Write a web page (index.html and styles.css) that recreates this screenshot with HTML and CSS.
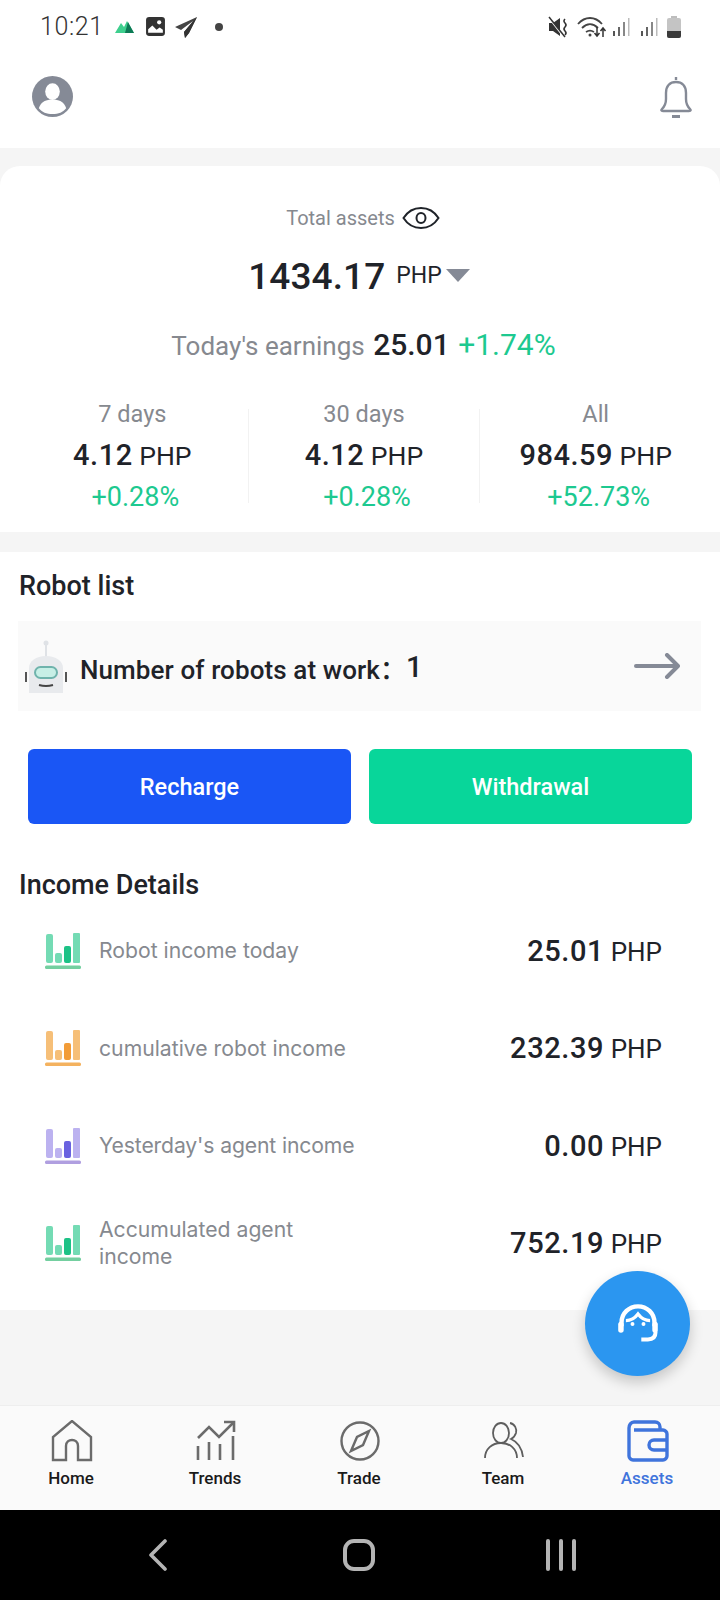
FILE: index.html
```html
<!DOCTYPE html>
<html lang="en">
<head>
<meta charset="utf-8">
<title>Assets</title>
<link rel="stylesheet" href="styles.css">
</head>
<body>
<div class="app">
  <div class="statusbar">
    <div class="status-left">
      <span class="clock">10:21</span>
      <svg class="si-peak" viewBox="0 0 20 14"><path d="M0 13 6 3l3 4 3-6 7 12z" fill="#3ecf8e"/><path d="M10 13 13 2l6 11z" fill="#0c7a55"/></svg>
      <svg class="si-pic" viewBox="0 0 20 20"><rect x="1" y="1" width="18" height="18" rx="3" fill="#333"/><circle cx="13.5" cy="6" r="2" fill="#fff"/><path d="M3 16V12.500l4-3.500 4 4 3-2 3 2V16z" fill="#fff"/></svg>
      <svg class="si-send" viewBox="0 0 24 22"><path d="M23 1 1 11l6 3 12-9-9 11 1 6 4-5z" fill="#444"/><path d="M23 1 15 17l-4 5-1-6z" fill="#333"/></svg>
      <span class="si-dot"></span>
    </div>
    <div class="status-right">
      <svg class="si-mute" viewBox="0 0 22 22"><path d="M1 7h4l7-5v18l-7-5H1z" fill="#333"/><path d="M1 2l14 18" stroke="#fff" stroke-width="1.500"/><path d="M1 1l16 20" stroke="#333" stroke-width="1.500"/><path d="M17 3q-2 2 0 4t0 4 0 4 0 4" fill="none" stroke="#333" stroke-width="1.600"/></svg>
      <svg class="si-wifi" viewBox="0 0 30 24"><g fill="none" stroke="#444" stroke-width="1.800"><path d="M1 9c7-8 17-8 24 0"/><path d="M5 13c5-5 11-5 16 0"/><path d="M9 17c3-2 5-2 8 0"/></g><circle cx="13" cy="20" r="1.500" fill="#444"/><path d="M20 12v9m-2.500-3 2.500 3 2.500-3" fill="none" stroke="#333" stroke-width="1.500"/><path d="M26 22v-9m-2.500 3 2.500-3 2.500 3" fill="none" stroke="#333" stroke-width="1.500"/></svg>
      <svg class="si-signal" viewBox="0 0 18 20"><rect x="1" y="14" width="2" height="5" fill="#555"/><rect x="6" y="10" width="2" height="9" fill="#666"/><rect x="11" y="5" width="2" height="14" fill="#888"/><rect x="16" y="1" width="1.500" height="18" fill="#bbb"/></svg>
      <svg class="si-signal" viewBox="0 0 18 20"><rect x="1" y="14" width="2" height="5" fill="#555"/><rect x="6" y="10" width="2" height="9" fill="#666"/><rect x="11" y="5" width="2" height="14" fill="#888"/><rect x="16" y="1" width="1.500" height="18" fill="#bbb"/></svg>
      <svg class="si-batt" viewBox="0 0 14 22"><rect x="4" y="0" width="6" height="3" fill="#bdbdbd"/><rect x="0" y="2" width="14" height="20" rx="2" fill="#c4c4c4"/><path d="M0 15h14v5a2 2 0 0 1-2 2H2a2 2 0 0 1-2-2z" fill="#3a3a3a"/></svg>
    </div>
  </div>

  <header class="topbar">
    <svg class="avatar" viewBox="0 0 42 42"><circle cx="21" cy="21" r="21" fill="#858a96"/><ellipse cx="21" cy="16" rx="7.500" ry="8.500" fill="#fff"/><path d="M7 33c2-7 8-9 14-9s12 2 14 9c-3 4-8 6-14 6s-11-2-14-6z" fill="#fff"/></svg>
    <svg class="bell" viewBox="0 0 34 44" fill="none" stroke="#858a96" stroke-width="2.400"><path d="M17 2v3"/><path d="M3 34c3-3 4-6 4-10v-6c0-7 4-11 10-11s10 4 10 11v6c0 4 1 7 4 10 1 1 1 2-1 2H4c-2 0-2-1-1-2z"/><path d="M13 41.500h8" stroke-width="3"/></svg>
  </header>

  <section class="summary">
    <div class="total-label">
      <span>Total assets</span>
      <svg class="eye" viewBox="0 0 38 24" fill="none" stroke="#1f2329" stroke-width="2"><path d="M1.500 12C6 5 12 2 19 2s13 3 17.500 10C32 19 26 22 19 22S6 19 1.500 12z"/><ellipse cx="19" cy="12" rx="4.500" ry="5"/></svg>
    </div>
    <div class="total-value">
      <span class="big">1434.17</span>
      <span class="unit">PHP</span>
      <span class="caret"></span>
    </div>
    <div class="earnings">
      <span class="muted">Today's earnings</span>
      <span class="strong">25.01</span>
      <span class="green">+1.74%</span>
    </div>
    <div class="periods">
      <div class="period">
        <div class="p-label">7 days</div>
        <div class="p-value"><b>4.12</b> PHP</div>
        <div class="p-pct">+0.28%</div>
      </div>
      <div class="period">
        <div class="p-label">30 days</div>
        <div class="p-value"><b>4.12</b> PHP</div>
        <div class="p-pct">+0.28%</div>
      </div>
      <div class="period">
        <div class="p-label">All</div>
        <div class="p-value"><b>984.59</b> PHP</div>
        <div class="p-pct">+52.73%</div>
      </div>
    </div>
  </section>

  <section class="panel">
    <h2 class="title">Robot list</h2>
    <div class="robots">
      <svg class="robot" viewBox="0 0 44 54">
        <circle cx="22" cy="3" r="2.500" fill="#dfe2e6"/>
        <rect x="21" y="4" width="2" height="13" fill="#dfe2e6"/>
        <rect x="1" y="32" width="2" height="10" fill="#555"/>
        <rect x="41" y="32" width="2" height="10" fill="#555"/>
        <path d="M5 28c0-7 7-12 17-12s17 5 17 12v25H5z" fill="#e8eaed"/>
        <rect x="11" y="27" width="22" height="11" rx="5.500" fill="#c7efe6" stroke="#6fb3ac" stroke-width="2"/>
        <path d="M15 45q7 2 14 0" fill="none" stroke="#444" stroke-width="2"/>
      </svg>
      <span class="robots-text">Number of robots at work：</span>
      <span class="robots-count">1</span>
      <svg class="arrow" viewBox="0 0 46 26" fill="none" stroke="#858a96" stroke-width="4" stroke-linecap="round" stroke-linejoin="round"><path d="M2 13h41"/><path d="M33 2l11 11-11 11"/></svg>
    </div>
    <div class="actions">
      <button class="btn btn-blue">Recharge</button>
      <button class="btn btn-green">Withdrawal</button>
    </div>
    <h2 class="title title-income">Income Details</h2>
    <ul class="income">
      <li class="row">
        <svg class="bars" viewBox="0 0 36 36"><rect x="1" y="1" width="7" height="29" rx="2" fill="#74dbb4"/><rect x="10" y="20" width="7" height="10" rx="2" fill="#74dbb4"/><rect x="19" y="13" width="7" height="17" rx="2" fill="#1dc286"/><rect x="28" y="0" width="7" height="30" rx="1" fill="#74dbb4"/><rect y="32.500" width="36" height="3.500" rx="1.500" fill="#74cfa0"/></svg>
        <span class="row-label">Robot income today</span>
        <span class="row-value"><b>25.01</b> PHP</span>
      </li>
      <li class="row">
        <svg class="bars" viewBox="0 0 36 36"><rect x="1" y="1" width="7" height="29" rx="2" fill="#f6bf78"/><rect x="10" y="20" width="7" height="10" rx="2" fill="#f6bf78"/><rect x="19" y="13" width="7" height="17" rx="2" fill="#f29c38"/><rect x="28" y="0" width="7" height="30" rx="1" fill="#f6bf78"/><rect y="32.500" width="36" height="3.500" rx="1.500" fill="#f4b25f"/></svg>
        <span class="row-label">cumulative robot income</span>
        <span class="row-value"><b>232.39</b> PHP</span>
      </li>
      <li class="row">
        <svg class="bars" viewBox="0 0 36 36"><rect x="1" y="1" width="7" height="29" rx="2" fill="#bcb2f0"/><rect x="10" y="20" width="7" height="10" rx="2" fill="#bcb2f0"/><rect x="19" y="13" width="7" height="17" rx="2" fill="#6a62e0"/><rect x="28" y="0" width="7" height="30" rx="1" fill="#bcb2f0"/><rect y="32.500" width="36" height="3.500" rx="1.500" fill="#b09fe0"/></svg>
        <span class="row-label">Yesterday's agent income</span>
        <span class="row-value"><b>0.00</b> PHP</span>
      </li>
      <li class="row">
        <svg class="bars" viewBox="0 0 36 36"><rect x="1" y="1" width="7" height="29" rx="2" fill="#74dbb4"/><rect x="10" y="20" width="7" height="10" rx="2" fill="#74dbb4"/><rect x="19" y="13" width="7" height="17" rx="2" fill="#1dc286"/><rect x="28" y="0" width="7" height="30" rx="1" fill="#74dbb4"/><rect y="32.500" width="36" height="3.500" rx="1.500" fill="#74cfa0"/></svg>
        <span class="row-label">Accumulated agent income</span>
        <span class="row-value"><b>752.19</b> PHP</span>
      </li>
    </ul>
  </section>

  <div class="spacer"></div>

  <nav class="tabbar">
    <div class="tab">
      <svg class="tab-icon" viewBox="0 0 42 42" fill="none" stroke="#6b6b6b" stroke-width="2.400"><path d="M2 40V17L21 1l19 16v23H27V26c0-8-12-8-12 0v14z"/></svg>
      <span>Home</span>
    </div>
    <div class="tab">
      <svg class="tab-icon" viewBox="0 0 42 42" fill="none" stroke="#6b6b6b" stroke-width="2.600"><path d="M3 18 14 7l10 10L39 2"/><path d="M29 2h10v10"/><path d="M3 26v14M14 22v18M25 24v16M38 16v24"/></svg>
      <span>Trends</span>
    </div>
    <div class="tab">
      <svg class="tab-icon" viewBox="0 0 42 42" fill="none" stroke="#6b6b6b" stroke-width="2.400"><circle cx="21" cy="21" r="18.500"/><path d="M30 11 24 25 12 31l6-14z"/></svg>
      <span>Trade</span>
    </div>
    <div class="tab">
      <svg class="tab-icon" viewBox="0 0 42 42" fill="none" stroke="#5e5e5e" stroke-width="1.800"><ellipse cx="18" cy="13" rx="8" ry="10"/><path d="M2 38c0-9 7-15 16-15s16 6 16 15"/><path d="M27 3c5 1 7 6 6 10-1 3-3 5-5 6 7 3 11 10 12 18"/></svg>
      <span>Team</span>
    </div>
    <div class="tab tab-on">
      <svg class="tab-icon" viewBox="0 0 42 42" fill="none" stroke="#3f74dc" stroke-width="3.400"><path d="M2 8c0-3 2-6 5-6h21c3 0 5 2 5 5v3"/><path d="M2 8v28c0 2 2 4 4 4h30c2 0 4-2 4-4V14c0-2-2-4-4-4H7"/><path d="M40 20H27a5 5 0 0 0 0 10h13" /></svg>
      <span>Assets</span>
    </div>
  </nav>

  <div class="navbar">
    <svg class="nav-back" viewBox="0 0 18 32" fill="none" stroke="#b4b4b4" stroke-width="3.600" stroke-linecap="round" stroke-linejoin="round"><path d="M16 2 2 16l14 14"/></svg>
    <svg class="nav-home" viewBox="0 0 32 32" fill="none" stroke="#b4b4b4" stroke-width="4"><rect x="2" y="2" width="28" height="28" rx="9"/></svg>
    <svg class="nav-recent" viewBox="0 0 30 32" fill="#b4b4b4"><rect x="0" y="0" width="4" height="32" rx="2"/><rect x="13" y="0" width="4" height="32" rx="2"/><rect x="26" y="0" width="4" height="32" rx="2"/></svg>
  </div>

  <button class="fab" aria-label="Support">
    <svg viewBox="0 0 40 40" fill="none" stroke="#fff"><path d="M5 22V19C5 10 12 4 20 4s15 6 15 15v3" stroke-width="4"/><path d="M9 17c4 0 8-2 11-6 3 4 7 6 11 6" stroke-width="3"/><rect x="2" y="18" width="5" height="10" rx="2.500" fill="#fff" stroke="none"/><rect x="33" y="18" width="5" height="10" rx="2.500" fill="#fff" stroke="none"/><path d="M36 27c0 4-2 7-7 7h-6" stroke-width="3.600"/><circle cx="15" cy="20" r="1.800" fill="#fff" stroke="none"/><circle cx="25" cy="20" r="1.800" fill="#fff" stroke="none"/></svg>
  </button>
</div>
</body>
</html>
```
FILE: styles.css
```css
* { box-sizing: border-box; }
html, body { margin: 0; padding: 0; }
body { font-family: Roboto, "Noto Sans CJK SC", "Liberation Sans", sans-serif; color: #1f2329; background: #f5f5f5; }
.app { position: relative; width: 720px; height: 1600px; display: flex; flex-direction: column; overflow: hidden; background: #f5f5f5; }

/* status bar */
.statusbar { height: 53px; background: #fff; display: flex; justify-content: space-between; align-items: center; padding: 0 39px 0 40px; flex: none; }
.status-left, .status-right { display: flex; align-items: center; }
.clock { font-size: 25px; font-weight: 300; color: #333; letter-spacing: .6px; margin-right: 11px; }
.si-peak { width: 20px; height: 14px; margin-right: 10px; }
.si-pic { width: 21px; height: 21px; margin-right: 8px; }
.si-send { width: 24px; height: 22px; margin-right: 17px; }
.si-dot { width: 8px; height: 8px; border-radius: 50%; background: #444; }
.si-mute { width: 22px; height: 22px; margin-right: 7px; }
.si-wifi { width: 30px; height: 24px; margin-right: 5px; }
.si-signal { width: 18px; height: 20px; margin-right: 10px; }
.si-signal + .si-signal { margin-right: 9px; }
.si-batt { width: 14px; height: 22px; }

/* top bar */
.topbar { height: 95px; background: #fff; display: flex; justify-content: space-between; align-items: center; padding: 0 27px 8px 32px; flex: none; }
.avatar { width: 41px; height: 41px; }
.bell { width: 34px; height: 44px; }

/* summary card */
.summary { margin-top: 18px; height: 366px; background: #fff; border-radius: 20px 20px 0 0; padding-top: 39px; text-align: center; flex: none; }
.total-label { display: flex; justify-content: center; align-items: center; gap: 7px; font-size: 20px; color: #86898f; height: 26px; padding-left: 6px; }
.eye { width: 38px; height: 24px; }
.total-value { display: flex; justify-content: center; align-items: center; margin-top: 22px; height: 46px; padding-right: 2px; }
.big { font-size: 37px; font-weight: 500; letter-spacing: .1px; }
.unit { font-size: 23px; margin-left: 11px; margin-bottom: 1px; }
.caret { width: 0; height: 0; margin-left: 4px; margin-bottom: 2px; border-left: 12px solid transparent; border-right: 12px solid transparent; border-top: 13px solid #858a96; }
.earnings { margin-top: 28px; font-size: 26px; height: 36px; line-height: 36px; padding-left: 7px; }
.muted { color: #86898f; }
.strong { font-size: 30px; font-weight: 500; margin-left: 2px; }
.green { font-size: 30px; margin-left: 2px; }
.green, .p-pct { color: #1dc990; }
.periods { display: flex; margin: 46px 9px 0 17px; }
.period { flex: 1; height: 94px; border-left: 1px solid #f2f2f2; }
.period:first-child { border-left: 0; }
.p-label { font-size: 23.500px; color: #86898f; line-height: 30px; margin-top: -10px; }
.p-value { font-size: 26.500px; line-height: 40px; margin-top: 6px; }
.p-value b { font-size: 29px; font-weight: 500; letter-spacing: .5px; }
.p-pct { font-size: 27px; line-height: 34px; margin-top: 4px; padding-left: 6px; }

/* robots and actions */
.panel { margin-top: 20px; height: 758px; background: #fff; padding: 0 0 0 19px; flex: none; }
.title { margin: 0; font-size: 27px; font-weight: 500; line-height: 36px; padding-top: 16px; box-sizing: content-box; }
.robots { display: flex; align-items: center; width: 683px; height: 90px; margin: 17px 0 0 -1px; background: #fafafa; padding-left: 6px; }
.robot { width: 44px; height: 54px; margin-top: 2px; }
.robots-text { margin-left: 12px; font-size: 26px; font-weight: 500; padding-top: 2px; white-space: nowrap; letter-spacing: .1px; }
.robots-count { font-size: 29px; font-weight: 500; padding-top: 2px; }
.arrow { width: 46px; height: 26px; margin-left: auto; margin-right: 21px; }
.actions { display: flex; gap: 18px; margin: 38px 0 0 9px; }
.btn { width: 323px; height: 75px; border: 0; border-radius: 6px; color: #fff; font: 500 23.500px Roboto, sans-serif; }
.btn-blue { background: #1a56f5; }
.btn-green { background: #08d69a; }
.title-income { padding-top: 43px; margin-bottom: -1px; }
.income { list-style: none; margin: 0; padding: 0; }
.row { display: flex; align-items: center; height: 97.500px; padding: 0 39px 0 26px; width: 682px; }
.bars { width: 36px; height: 36px; flex: none; }
.row-label { font-family: Inter, sans-serif; font-size: 21.200px; color: #86898f; line-height: 27px; margin-left: 18px; width: 250px; }
.row:nth-child(2) .row-label, .row:nth-child(3) .row-label { width: 270px; white-space: nowrap; }
.row:nth-child(3) .row-label { letter-spacing: -.15px; }
.row-value { margin-left: auto; font-size: 26px; white-space: nowrap; }
.row-value b { font-size: 29px; font-weight: 500; letter-spacing: .6px; }

.spacer { flex: 1; }

/* bottom tabs */
.tabbar { height: 105px; display: flex; background: #fafafa; border-top: 1px solid #eee; flex: none; }
.tab { flex: 1; display: flex; flex-direction: column; align-items: center; padding-top: 14px; font-size: 17px; font-weight: 500; color: #1a1a1a; }
.tab span { margin-right: 2px; }
.tab-icon { width: 42px; height: 42px; margin-bottom: 6px; }
.tab-on { color: #3f74dc; }

/* system navigation */
.navbar { height: 90px; background: #000; display: flex; align-items: center; flex: none; padding-left: 149px; }
.nav-back { width: 18px; height: 32px; }
.nav-home { width: 32px; height: 32px; margin-left: 176px; }
.nav-recent { width: 30px; height: 32px; margin-left: 171px; }

/* floating support button */
.fab { position: absolute; left: 585px; top: 1271px; width: 105px; height: 105px; border: 0; border-radius: 50%; background: #2b96f0; box-shadow: 0 6px 14px rgba(0,0,0,.2); display: flex; align-items: center; justify-content: center; padding: 0; }
.fab svg { width: 44px; height: 44px; }
```
